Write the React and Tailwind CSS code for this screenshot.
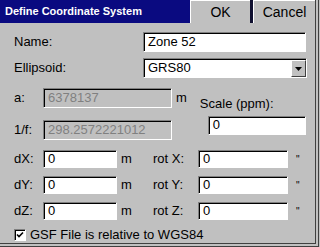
import React from "react";

function Field({ value, disabled, className }) {
  return (
    <div
      className={
        "h-[20px] flex items-center pl-[4px] border-t border-l border-t-[#808080] border-l-[#808080] border-b border-r border-b-white border-r-white shadow-[inset_1px_1px_0_#000] " +
        (disabled ? "bg-[#c0c0c0] text-[#808080] " : "bg-white text-black ") +
        className
      }
    >
      {value}
    </div>
  );
}

function DeltaRow({ label, rot }) {
  return (
    <div className="flex items-center h-[18px]">
      <span className="w-[29px]">{label}</span>
      <Field value="0" className="w-[74px] !h-[18px]" />
      <span className="w-[36px] pl-[4px]">m</span>
      <span className="w-[45px]">{rot}</span>
      <Field value="0" className="w-[90px] !h-[18px]" />
      <span className="pl-[8px] text-[10px]">"</span>
    </div>
  );
}

export default function App() {
  return (
    <div className="w-[320px] h-[247px] bg-[#c0c0c0] overflow-hidden text-[13px] text-black" style={{ fontFamily: "'Liberation Sans', Arial, sans-serif" }}>
      <div className="w-[319px] h-[247px] border-r border-b border-[#404040] pr-[2px] pb-[2px]">
        <div className="w-full h-full border-r border-b border-[#404040] flex flex-col">
          {/* title bar */}
          <div className="flex h-[23px] bg-[#0a0a80] shrink-0">
            <div className="flex-1 pl-[5px] flex items-center text-white font-bold text-[11px]">
              Define Coordinate System
            </div>
            <div className="w-[60px] bg-[#c0c0c0] flex items-center justify-center text-[14px] border-t border-l border-white">
              OK
            </div>
            <div className="w-[3px] bg-[#101030]" />
            <div className="w-[62px] bg-[#c0c0c0] flex items-center justify-center text-[14px] border-t border-l border-white">
              Cancel
            </div>
          </div>

          <div className="pl-[14px] pt-[9px] flex flex-col">
            <div className="flex items-center">
              <span className="w-[129px]">Name:</span>
              <Field value="Zone 52" className="w-[163px]" />
            </div>

            <div className="flex items-center mt-[6px]">
              <span className="w-[129px]">Ellipsoid:</span>
              <div className="w-[164px] h-[20px] flex bg-white border-t border-l border-t-[#808080] border-l-[#808080] border-b border-r border-b-white border-r-white shadow-[inset_1px_1px_0_#000]">
                <span className="flex-1 pl-[4px] flex items-center">GRS80</span>
                <div className="w-[15px] h-[17px] mt-[1px] bg-[#c0c0c0] border-t border-l border-white border-r border-b border-r-[#404040] border-b-[#404040] flex items-center justify-center">
                  <svg width="7" height="4" viewBox="0 0 7 4">
                    <path d="M0 0H7L3.5 4Z" fill="#000" />
                  </svg>
                </div>
              </div>
            </div>

            <div className="flex mt-[10px]">
              <div className="flex flex-col">
                <div className="flex items-center">
                  <span className="w-[29px]">a:</span>
                  <Field value="6378137" disabled className="w-[129px]" />
                  <span className="pl-[4px]">m</span>
                </div>
                <div className="flex items-center mt-[12px]">
                  <span className="w-[29px]">1/f:</span>
                  <Field value="298.2572221012" disabled className="w-[129px]" />
                </div>
              </div>
              <div className="flex flex-col ml-[13px] mt-[6px]">
                <span>Scale (ppm):</span>
                <Field value="0" className="w-[98px] ml-[8px] mt-[2px] !h-[19px]" />
              </div>
            </div>

            <div className="flex flex-col gap-[8px] mt-[10px]">
              <DeltaRow label="dX:" rot="rot X:" />
              <DeltaRow label="dY:" rot="rot Y:" />
              <DeltaRow label="dZ:" rot="rot Z:" />
            </div>

            <div className="flex items-center mt-[5px]">
              <div className="w-[12px] h-[12px] bg-white border-t border-l border-[#808080] border-b border-r border-b-white border-r-white shadow-[inset_1px_1px_0_#000] flex items-center justify-center">
                <svg width="8" height="8" viewBox="0 0 8 8">
                  <path d="M1 3.5L3 5.5L7 1.5" stroke="#000" strokeWidth="1.6" fill="none" />
                </svg>
              </div>
              <span className="pl-[4px]">GSF File is relative to WGS84</span>
            </div>
          </div>
        </div>
      </div>
    </div>
  );
}
